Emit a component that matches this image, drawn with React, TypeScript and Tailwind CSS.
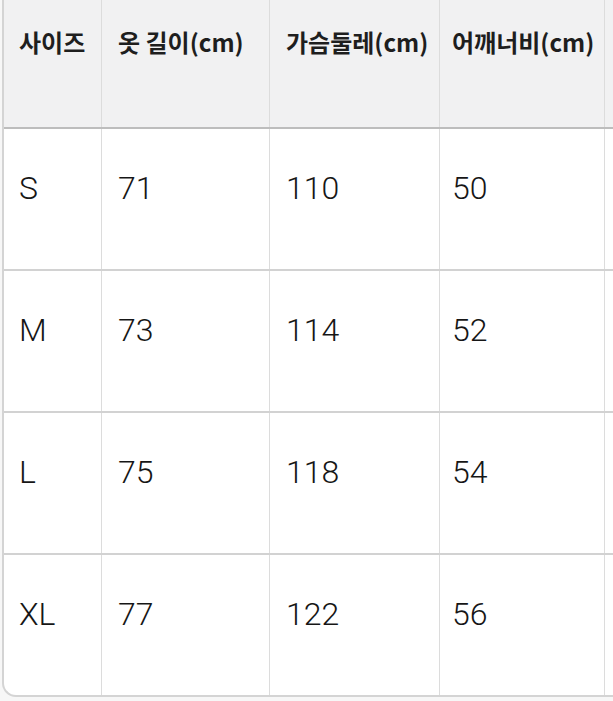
import React from "react";

const headers = ["사이즈", "옷 길이(cm)", "가슴둘레(cm)", "어깨너비(cm)", ""];

const rows = [
  ["S", "71", "110", "50", ""],
  ["M", "73", "114", "52", ""],
  ["L", "75", "118", "54", ""],
  ["XL", "77", "122", "56", ""],
];

// column widths and left padding taken from the screenshot
const colPad = ["pl-[15px]", "pl-[16px]", "pl-[16px]", "pl-[12px]", "pl-[10px]"];

export default function App() {
  return (
    <div className="h-[701px] w-[613px] overflow-hidden bg-[#f7f7f7]">
      <div className="ml-[2px] w-[660px] overflow-hidden rounded-bl-[14px] border-b-2 border-l-2 border-[#d4d4d4] bg-white">
        <div
          className="grid grid-cols-[98px_168px_170px_165px_1fr] bg-[#f1f1f2] border-b-2 border-[#bdbdbd]"
          style={{ fontFamily: '"Noto Sans CJK KR", "Noto Sans", sans-serif' }}
        >
          {headers.map((h, i) => (
            <div
              key={i}
              className={`h-[127px] border-r border-[#dcdcdc] pt-[24px] text-[24px] font-bold tracking-[0px] text-[#1e1e1e] whitespace-nowrap ${colPad[i]}`}
            >
              {h}
            </div>
          ))}
        </div>

        {rows.map((r, ri) => (
          <div
            key={ri}
            className={`grid grid-cols-[98px_168px_170px_165px_1fr] ${
              ri < rows.length - 1 ? "border-b-2 border-[#d2d2d2]" : ""
            }`}
            style={{ fontFamily: "Roboto, sans-serif" }}
          >
            {r.map((c, ci) => (
              <div
                key={ci}
                className={`flex h-[140px] items-center border-r border-[#dcdcdc] pb-[22px] text-[32px] font-light text-[#161616] ${colPad[ci]}`}
              >
                {c}
              </div>
            ))}
          </div>
        ))}
      </div>
    </div>
  );
}
